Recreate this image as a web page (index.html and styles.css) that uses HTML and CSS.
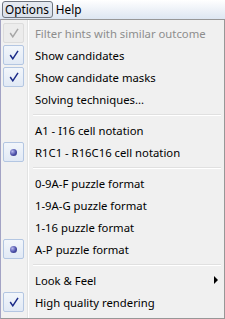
FILE: index.html
```html
<!DOCTYPE html>
<html>
<head>
<meta charset="utf-8">
<link rel="stylesheet" href="styles.css">
</head>
<body>
<div class="menubar">
  <span class="menu active">Options</span>
  <span class="menu">Help</span>
</div>
<div class="popup">
  <div class="item disabled"><span class="gutter"><span class="box"><svg class="check" width="10" height="10" viewBox="0 0 10 10"><path d="M1.2 5 L3.8 8.8 L9 0.8" /></svg></span></span><span class="label">Filter hints with similar outcome</span></div>
  <div class="item"><span class="gutter"><span class="box"><svg class="check" width="10" height="10" viewBox="0 0 10 10"><path d="M1.2 5 L3.8 8.8 L9 0.8" /></svg></span></span><span class="label">Show candidates</span></div>
  <div class="item"><span class="gutter"><span class="box"><svg class="check" width="10" height="10" viewBox="0 0 10 10"><path d="M1.2 5 L3.8 8.8 L9 0.8" /></svg></span></span><span class="label">Show candidate masks</span></div>
  <div class="item"><span class="gutter"></span><span class="label">Solving techniques...</span></div>
  <div class="sep"></div>
  <div class="item"><span class="gutter"></span><span class="label">A1 - I16 cell notation</span></div>
  <div class="item"><span class="gutter"><span class="box"><span class="dot"></span></span></span><span class="label">R1C1 - R16C16 cell notation</span></div>
  <div class="sep"></div>
  <div class="item"><span class="gutter"></span><span class="label">0-9A-F puzzle format</span></div>
  <div class="item"><span class="gutter"></span><span class="label">1-9A-G puzzle format</span></div>
  <div class="item"><span class="gutter"></span><span class="label">1-16 puzzle format</span></div>
  <div class="item"><span class="gutter"><span class="box"><span class="dot"></span></span></span><span class="label">A-P puzzle format</span></div>
  <div class="sep"></div>
  <div class="item"><span class="gutter"></span><span class="label">Look &amp; Feel</span><span class="arrow"></span></div>
  <div class="item"><span class="gutter"><span class="box"><svg class="check" width="10" height="10" viewBox="0 0 10 10"><path d="M1.2 5 L3.8 8.8 L9 0.8" /></svg></span></span><span class="label">High quality rendering</span></div>
</div>
</body>
</html>
```

FILE: styles.css
```css
html, body {
  margin: 0;
  padding: 0;
  background: #ffffff;
}
body {
  width: 225px;
  height: 319px;
  overflow: hidden;
  font-family: "Noto Sans", "DejaVu Sans", sans-serif;
  font-size: 11.3px;
  color: #000;
}
.menubar {
  height: 19px;
  display: flex;
  align-items: center;
  gap: 0;
  padding-left: 2px;
  box-sizing: border-box;
  background: linear-gradient(to bottom, #ffffff 0%, #eef2f8 50%, #dde6f2 100%);
}
.menu {
  height: 17px;
  line-height: 15px;
  padding: 0 3px 0 2px;
  box-sizing: border-box;
  border: 1px solid transparent;
  font-size: 11.8px;
}
.menu.active {
  border-color: #6f7680;
  border-radius: 3px;
  background: linear-gradient(to bottom, #e6ebf2, #d9e0ea);
}
.popup {
  height: 300px;
  box-sizing: border-box;
  border: 1px solid #979797;
  border-left-color: #a3a3c4;
  padding: 2px;
  background: linear-gradient(to right, #f1f1f1 0 26px, #e2e3e3 26px 27px, #ffffff 27px 28px, #f0f0f0 28px);
}
.item {
  height: 22px;
  display: flex;
  align-items: center;
}
.gutter {
  width: 32px;
  height: 22px;
  display: flex;
  align-items: center;
  flex: none;
}
.box {
  width: 21px;
  height: 20px;
  box-sizing: border-box;
  border: 1px solid #b3c6e2;
  border-radius: 2px;
  background: linear-gradient(to bottom, #f2f6fb, #e1e9f5);
  display: flex;
  align-items: center;
  justify-content: center;
}
.check path {
  fill: none;
  stroke: #1a2a88;
  stroke-width: 1.5;
}
.disabled .box {
  border-color: #dcdcdc;
  background: #ececec;
}
.disabled .check path {
  stroke: #a6a6a6;
}
.disabled .label {
  color: #8d8d8d;
}
.dot {
  width: 7px;
  height: 7px;
  border-radius: 50%;
  background: radial-gradient(circle at 35% 35%, #b7b9ee 0, #4a4ea8 55%, #2a2c70 100%);
}
.label {
  flex: 1;
  white-space: nowrap;
}
.arrow {
  width: 0;
  height: 0;
  border-top: 4px solid transparent;
  border-bottom: 4px solid transparent;
  border-left: 4px solid #000;
  margin-right: 4px;
}
.sep {
  height: 9px;
  margin-left: 30px;
  margin-right: 1px;
  display: flex;
  flex-direction: column;
  justify-content: center;
}
.sep::before {
  content: "";
  display: block;
  height: 1px;
  background: #e0e0e0;
}
.sep::after {
  content: "";
  display: block;
  height: 1px;
  background: #ffffff;
}
```
